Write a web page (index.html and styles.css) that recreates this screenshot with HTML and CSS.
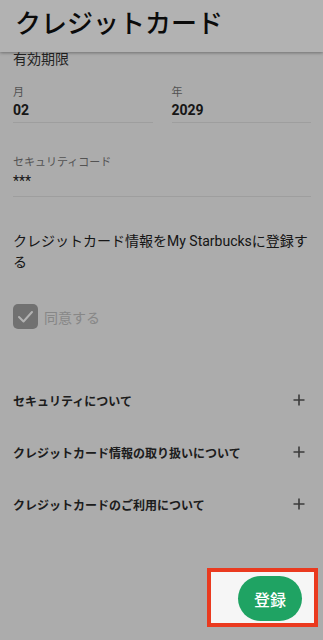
FILE: index.html
```html
<!DOCTYPE html>
<html lang="ja">
<head>
<meta charset="utf-8">
<title>クレジットカード</title>
<link rel="stylesheet" href="styles.css">
</head>
<body>
<div class="page">
  <header class="appbar">
    <h1 class="title">クレジットカード</h1>
  </header>
  <main class="content">
    <div class="section-title">有効期限</div>
    <div class="field-row">
      <div class="field">
        <div class="field-label">月</div>
        <div class="field-value">02</div>
      </div>
      <div class="field">
        <div class="field-label">年</div>
        <div class="field-value">2029</div>
      </div>
    </div>
    <div class="field field-security">
      <div class="field-label">セキュリティコード</div>
      <div class="field-value field-value-secret">***</div>
    </div>
    <p class="register-text">クレジットカード情報をMy Starbucksに登録する</p>
    <label class="agree">
      <svg class="checkbox" width="25" height="25" viewBox="0 0 25 25">
        <rect x="0" y="0" width="25" height="25" rx="5" fill="#a2a2a2"/>
        <polyline points="6,13 10.5,17.5 19,8" fill="none" stroke="#ffffff" stroke-width="2" stroke-linecap="round" stroke-linejoin="round"/>
      </svg>
      <span class="agree-text">同意する</span>
    </label>
    <ul class="accordion">
      <li class="acc-row"><span class="acc-text">セキュリティについて</span>
        <svg class="plus" width="12" height="12" viewBox="0 0 12 12"><path d="M6 0.5V11.5M0.5 6H11.5" stroke="#555" stroke-width="1.6"/></svg></li>
      <li class="acc-row"><span class="acc-text">クレジットカード情報の取り扱いについて</span>
        <svg class="plus" width="12" height="12" viewBox="0 0 12 12"><path d="M6 0.5V11.5M0.5 6H11.5" stroke="#555" stroke-width="1.6"/></svg></li>
      <li class="acc-row"><span class="acc-text">クレジットカードのご利用について</span>
        <svg class="plus" width="12" height="12" viewBox="0 0 12 12"><path d="M6 0.5V11.5M0.5 6H11.5" stroke="#555" stroke-width="1.6"/></svg></li>
    </ul>
    <div class="footer">
      <button class="submit" type="button">登録</button>
    </div>
  </main>
  <div class="spotlight"></div>
</div>
</body>
</html>
```

FILE: styles.css
```css
html, body {
  margin: 0;
  padding: 0;
}
body {
  width: 323px;
  height: 640px;
  overflow: hidden;
  background: #f6f6f6;
  font-family: "Roboto", "Noto Sans CJK JP", sans-serif;
  color: #222;
}
.page {
  position: relative;
  width: 323px;
  height: 640px;
  overflow: hidden;
}
.appbar {
  position: relative;
  z-index: 2;
  height: 52px;
  background: #ffffff;
  box-shadow: 0 1px 3px rgba(0,0,0,0.35);
  display: flex;
  align-items: center;
  padding-left: 15px;
}
.title {
  margin: 0;
  font-size: 26px;
  font-weight: 500;
  line-height: 30px;
  color: #111;
  padding-bottom: 4px;
}
.content {
  padding: 0 12px 0 13px;
}
.section-title {
  font-size: 14px;
  line-height: 16px;
  margin-top: -1px;
  color: #333;
}
.field-row {
  display: grid;
  grid-template-columns: 1fr 1fr;
  column-gap: 19px;
  margin-top: 19px;
}
.field {
  border-bottom: 1px solid #e2e2e2;
  padding-bottom: 3px;
}
.field-label {
  font-size: 11px;
  line-height: 14px;
  color: #777;
}
.field-value {
  font-size: 14px;
  font-weight: 700;
  line-height: 18px;
  margin-top: 1px;
  color: #222;
}
.field-security {
  margin-top: 33px;
  padding-bottom: 6px;
}
.field-value-secret {
  margin-top: 2px;
  font-weight: 400;
}
.register-text {
  margin: 34px 0 0;
  font-size: 14px;
  line-height: 21px;
  color: #222;
}
.agree {
  display: flex;
  align-items: center;
  gap: 6px;
  margin-top: 31px;
}
.checkbox {
  display: block;
}
.agree-text {
  font-size: 14px;
  color: #c2c2c2;
}
.accordion {
  list-style: none;
  margin: 45px 0 0;
  padding: 0;
}
.acc-row {
  height: 52px;
  display: flex;
  align-items: center;
  justify-content: space-between;
  padding-right: 6px;
}
.acc-text {
  font-size: 12px;
  font-weight: 700;
  color: #2a2a2a;
}
.plus {
  display: block;
}
.footer {
  display: flex;
  justify-content: flex-end;
  margin-top: 46px;
  padding-right: 9px;
}
.submit {
  width: 64px;
  height: 45px;
  border: none;
  border-radius: 23px;
  background: #1fa363;
  color: #ffffff;
  font-family: "Roboto", "Noto Sans CJK JP", sans-serif;
  font-size: 16px;
  font-weight: 500;
  padding: 0;
}
.spotlight {
  position: absolute;
  z-index: 5;
  left: 207px;
  top: 568px;
  width: 111px;
  height: 59px;
  box-sizing: border-box;
  border: 4px solid #ea3a1f;
  box-shadow: 0 0 0 1200px rgba(0,0,0,0.3);
}
```
